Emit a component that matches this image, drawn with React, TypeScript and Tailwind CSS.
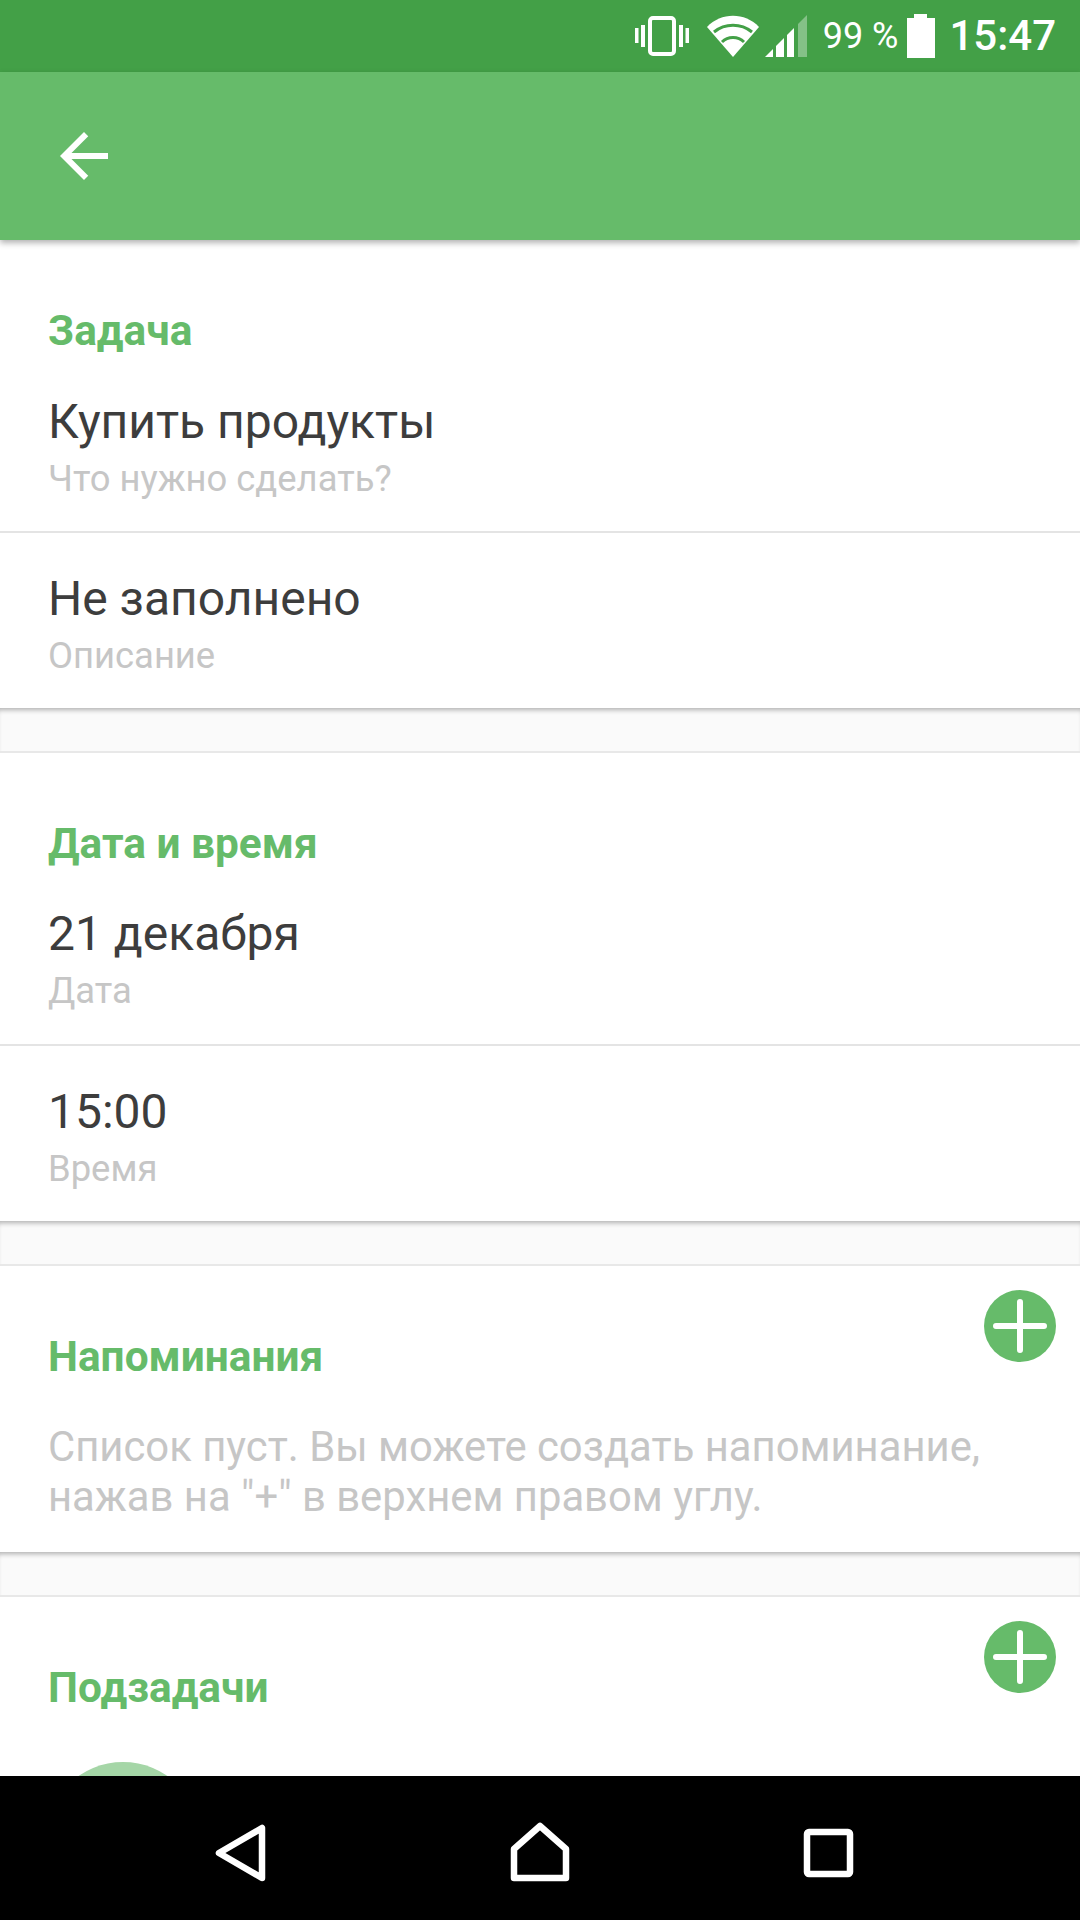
const font = { fontFamily: "Roboto, sans-serif" };

const SectionTitle = ({ children }: { children: string }) => (
  <h2 className="text-[42.4px] leading-[46px] font-bold text-[#66bb6a]">{children}</h2>
);

const Field = ({ value, label }: { value: string; label: string }) => (
  <div className="px-12">
    <div className="text-[48px] leading-[56px] text-[#3d3d3d]">{value}</div>
    <div className="text-[36.4px] leading-[40px] mt-[9px] text-[#c6c6c6]">{label}</div>
  </div>
);

const AddButton = () => (
  <button className="absolute right-[24px] top-[24px] w-[72px] h-[72px] rounded-full bg-[#66bb6a] flex items-center justify-center">
    <svg width="54" height="54" viewBox="0 0 54 54" fill="none" stroke="#fff" strokeWidth="6" strokeLinecap="round">
      <path d="M27 3v48M3 27h48" />
    </svg>
  </button>
);

const Gap = () => (
  <div className="h-[45px] bg-[#fafafa] border-b-2 border-[#e8e8e8] shadow-[inset_0_5px_5px_-3px_rgba(0,0,0,0.3)]" />
);

export default function App() {
  return (
    <div className="w-[1080px] h-[1920px] flex flex-col bg-white overflow-hidden" style={font}>
      {/* status bar */}
      <div className="h-[72px] bg-[#43a047] flex items-center justify-end pr-[24px] text-white shrink-0">
        <svg width="54" height="40" viewBox="0 0 54 40" fill="#fff" className="mr-[18px]">
          <rect x="0" y="12" width="3.5" height="15" />
          <rect x="6" y="9" width="4" height="22" />
          <rect x="15" y="2" width="24" height="36" rx="3" fill="none" stroke="#fff" strokeWidth="4" />
          <rect x="44" y="9" width="4" height="22" />
          <rect x="50.5" y="12" width="3.5" height="15" />
        </svg>
        <svg width="52" height="42" viewBox="0 0 52 42" className="mr-[6px]">
          <path d="M0 12C14 -3 38 -3 52 12L26 42Z" fill="#fff" />
          <path d="M7 17C18 8 34 8 45 17" stroke="#43a047" strokeWidth="3" fill="none" />
          <path d="M15 27C21 21 31 21 37 27" stroke="#43a047" strokeWidth="3" fill="none" />
        </svg>
        <svg width="42" height="42" viewBox="0 0 42 42" className="mr-[16px]">
          <path d="M0 42L8 34V42Z" fill="#fff" />
          <path d="M11 31L19 23V42H11Z" fill="#fff" />
          <path d="M22 20L29 13V42H22Z" fill="#fff" />
          <path d="M33 9L42 0V42H33Z" fill="#fff" fillOpacity="0.35" />
        </svg>
        <span className="text-[36px] leading-none mr-[9px]">99 %</span>
        <svg width="28" height="44" viewBox="0 0 28 44" fill="#fff" className="mr-[14px]">
          <path d="M7 0H20V4H28V44H0V4H7Z" />
        </svg>
        <span className="text-[42px] leading-none font-medium">15:47</span>
      </div>

      {/* toolbar */}
      <div className="relative z-10 h-[168px] bg-[#66bb6a] flex items-center pl-[48px] shrink-0 shadow-[0_3px_6px_rgba(0,0,0,0.3)]">
        <svg width="72" height="72" viewBox="0 0 24 24" fill="#fff">
          <path d="M20 11H7.83l5.59-5.59L12 4l-8 8 8 8 1.41-1.41L7.83 13H20v-2z" />
        </svg>
      </div>

      <div className="flex-1 overflow-hidden">
        <section className="h-[468px] pt-[68px]">
          <div className="px-12"><SectionTitle>Задача</SectionTitle></div>
          <div className="mt-[40px] h-[137px]">
            <Field value="Купить продукты" label="Что нужно сделать?" />
          </div>
          <div className="border-t-2 border-[#e4e4e4] pt-[38px]">
            <Field value="Не заполнено" label="Описание" />
          </div>
        </section>
        <Gap />
        <section className="h-[468px] pt-[68px]">
          <div className="px-12"><SectionTitle>Дата и время</SectionTitle></div>
          <div className="mt-[39px] h-[138px]">
            <Field value="21 декабря" label="Дата" />
          </div>
          <div className="border-t-2 border-[#e4e4e4] pt-[38px]">
            <Field value="15:00" label="Время" />
          </div>
        </section>
        <Gap />
        <section className="relative h-[286px] pt-[68px] px-12">
          <AddButton />
          <SectionTitle>Напоминания</SectionTitle>
          <p className="mt-[42px] text-[41.8px] leading-[50px] text-[#c6c6c6]">
            Список пуст. Вы можете создать напоминание, нажав на "+" в верхнем правом углу.
          </p>
        </section>
        <Gap />
        <section className="relative h-[179px] pt-[68px] px-12 overflow-hidden">
          <AddButton />
          <SectionTitle>Подзадачи</SectionTitle>
          <div className="mt-[51px] ml-[-3px] w-[156px] h-[156px] rounded-full bg-[#a5d6a7]" />
        </section>
      </div>

      {/* nav bar */}
      <div className="h-[144px] bg-black shrink-0">
        <svg width="1080" height="144" viewBox="0 0 1080 144" fill="none" stroke="#fff" strokeWidth="6.5" strokeLinejoin="round">
          <path d="M262 52V102L219 77Z" />
          <path d="M540 50L566 73V102H514V73Z" />
          <rect x="807" y="56" width="43" height="42" rx="2" />
        </svg>
      </div>
    </div>
  );
}
